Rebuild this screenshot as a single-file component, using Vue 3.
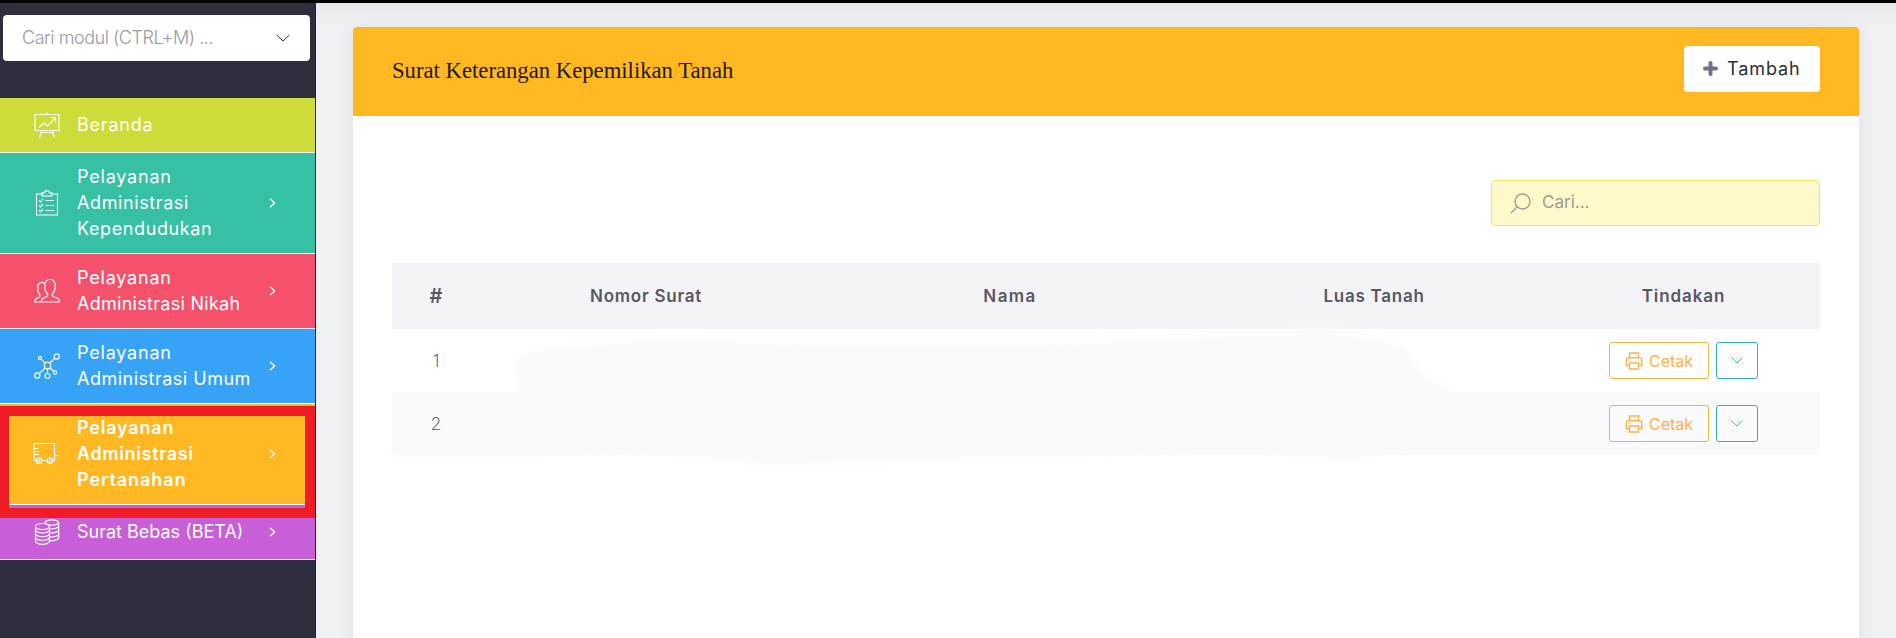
<script setup>
const menu = [
  { key: 'home', lines: ['Beranda'], arrow: false },
  { key: 'people', lines: ['Pelayanan', 'Administrasi', 'Kependudukan'], arrow: true },
  { key: 'marriage', lines: ['Pelayanan', 'Administrasi Nikah'], arrow: true },
  { key: 'general', lines: ['Pelayanan', 'Administrasi Umum'], arrow: true },
  { key: 'land', lines: ['Pelayanan', 'Administrasi', 'Pertanahan'], arrow: true },
  { key: 'free', lines: ['Surat Bebas (BETA)'], arrow: true },
]
const rows = [1, 2]
</script>

<template>
  <div class="app">
    <aside class="sidebar">
      <div class="module">
        <span class="module-text">Cari modul (CTRL+M) ...</span>
        <svg class="module-arrow" viewBox="0 0 14 8"><path d="M.7 1 L7 7 L13.3 1" /></svg>
      </div>
      <nav class="menu">
        <div v-for="m in menu" :key="m.key" class="item" :class="m.key">
          <svg class="icon" viewBox="0 0 26 26">
            <g v-if="m.key === 'home'">
              <path d="M1 2.5h24v16H1zM13 .5v2M7 19v1.5h12V19M7.500 20.500l-2 5M18.500 20.500l2 5" />
              <path d="M5 15.500l5-4.500 3.500 3L21 6M16.500 5.500H21.500V10.500" />
            </g>
            <g v-else-if="m.key === 'people'">
              <path d="M8 4H2.500V25H23.500V4H18M8 2.800h2.500Q10.800.6 13 .6T15.500 2.800H18V6H8z" />
              <path d="M11.500 10.500H20M11.500 15.500H20M11.500 20.500H20M5 10.300l1.500 1.500 2.500-3M5 15.300l1.500 1.500 2.500-3M5 20.300l1.500 1.500 2.500-3" />
            </g>
            <g v-else-if="m.key === 'marriage'">
              <path d="M7.500 24V22.500Q7.500 20.500 10 19.700C12.500 19 13.800 18.500 13.800 16.500C11.800 14.500 10.600 11.500 10.800 8Q10.900 1.500 16 1.500T21.200 8C21.300 11.500 20 14.500 18.200 16.500C18.200 18.500 19.500 19 22 19.700Q25.500 20.500 25.500 24z" />
              <path d="M10.500 5.500Q8.500 3.600 6 5Q3.400 6.500 3.700 10C3.500 13 4.300 15 6 16.800C6.500 19.500 4.500 19.500 2.500 20.500Q.6 21.500.6 24H7.500" />
            </g>
            <g v-else-if="m.key === 'general'">
              <circle cx="13.500" cy="12.500" r="3.300" /><circle cx="22.800" cy="3.500" r="2.600" /><circle cx="3.300" cy="22.500" r="2.600" />
              <circle cx="13.500" cy="23" r="2.500" /><circle cx="6" cy="5" r="1.600" /><circle cx="21" cy="19.500" r="1.700" />
              <path d="M15.800 10l5-4.700M11.200 15l-6 5.700M13.500 16v4.400M7.200 6.200l3.900 4M16 15l3.700 3.300" />
            </g>
            <g v-else-if="m.key === 'land'">
              <path d="M3.500 19.500H1V2.500H21.500V19.500H20M8.500 19.500H14.500M21.500 14.500H25.500M1 7.500H5M1 10.500H8M1 13.500H6" />
              <circle cx="6" cy="19.800" r="2.700" /><circle cx="17" cy="19.800" r="2.700" /><circle cx="6" cy="19.800" r=".6" /><circle cx="17" cy="19.800" r=".6" />
            </g>
            <g v-else>
              <ellipse cx="8.500" cy="7.500" rx="7" ry="3" />
              <path d="M1.500 7.500V22Q2.500 25.300 8.500 25.300T15.500 22V7.500M1.500 11Q3 14 8.500 14T15.500 11M1.500 14.700Q3 17.700 8.500 17.700T15.500 14.700M1.500 18.400Q3 21.400 8.500 21.400T15.500 18.400" />
              <path d="M11 4.500V3.500Q12 .8 17.800.8T24.700 3.500V19Q24 21.500 15.500 22M11 3.500Q12 6.200 17.800 6.200T24.700 3.500M15.500 10Q23.500 10 24.700 7.300M15.500 14Q23.500 14 24.700 11.200M15.500 18Q23.500 18 24.700 15.200" />
            </g>
          </svg>
          <div class="label"><span v-for="(l, i) in m.lines" :key="i" :class="'l' + i">{{ l }}</span></div>
          <svg v-if="m.arrow" class="chev" viewBox="0 0 7 10"><path d="M1 .8L5.600 5 1 9.200" /></svg>
        </div>
      </nav>
      <div class="marker"></div>
    </aside>

    <main class="main">
      <section class="card">
        <header class="card-head">
          <h1>Surat Keterangan Kepemilikan Tanah</h1>
          <button class="add">
            <svg viewBox="0 0 15 15"><path d="M7.500 2v11M2 7.500h11" /></svg>
            <span>Tambah</span>
          </button>
        </header>
        <div class="card-body">
          <div class="search">
            <svg viewBox="0 0 21 21"><circle cx="12.500" cy="8.500" r="7.500" /><path d="M7.200 13.800L.8 20.200" /></svg>
            <span>Cari...</span>
          </div>
          <div class="table">
            <svg class="haze" viewBox="0 0 1160 180">
              <path d="M160 36L300 24 420 30 680 30 960 16 1030 32 1050 60 1085 78 1090 125 1020 136 980 150 880 136 700 142 400 154 270 138 30 146 10 138 40 132 150 80 140 50z" />
            </svg>
            <div class="tr th">
              <span class="hash">#</span><span class="h1">Nomor Surat</span><span class="h2">Nama</span><span class="h3">Luas Tanah</span><span class="h4">Tindakan</span>
            </div>
            <div v-for="r in rows" :key="r" class="tr" :class="{ even: r === 2 }">
              <span class="num">{{ r }}</span><span></span><span></span><span></span>
              <div class="actions">
                <button class="print">
                  <svg viewBox="0 0 18 18"><path d="M4.500 5.500V1h9V5.500M4.500 13.500H1.500V7.500Q1.500 5.700 3.500 5.700H14.500Q16.700 5.700 16.700 7.500V13.500H13.500M4.500 11h9v6h-9zM3.500 8.300h1" /></svg>
                  <span>Cetak</span>
                </button>
                <button class="drop"><svg viewBox="0 0 12 7"><path d="M.6 .6L6 6 11.400 .6" /></svg></button>
              </div>
            </div>
          </div>
        </div>
      </section>
    </main>
  </div>
</template>

<style>
body { margin: 0; overflow: hidden; }
</style>

<style scoped>
* { box-sizing: border-box; }
svg { fill: none; stroke: currentColor; flex: none; display: block; }
button { font: inherit; margin: 0; }
.app { display: flex; width: 1896px; height: 638px; overflow: hidden; border-top: 3px solid #000; font-family: Inter, "Noto Sans", sans-serif; background: #eff1f5; }
.sidebar { position: relative; width: 316px; flex: none; background: #2d2e3e; border-right: 1px solid #25252f; padding-top: 12px; }
.module { display: flex; align-items: center; justify-content: space-between; width: 307px; height: 46px; margin-left: 3px; padding: 0 20px 0 19px; background: #fff; border-radius: 4px; color: #9a9a9e; font-size: 18px; font-weight: 300; }
.module-text { position: relative; top: -1px; letter-spacing: -.45px; white-space: nowrap; }
.module-arrow { width: 14px; height: 8px; color: #333; stroke-width: 1; }
.menu { margin-top: 37px; }
.item { display: flex; align-items: center; height: 75px; border-bottom: 1px solid #f2f5f5; padding-left: 34px; color: #fff; font-size: 18px; line-height: 26px; }
.home { height: 55px; background: #cddc39; }
.people { height: 101px; background: #36c1a4; }
.marriage { background: #f5516c; }
.general { background: #36a3f7; }
.land { height: 101px; background: #ffb822; font-weight: 600; }
.free { height: 55px; background: #c85fd8; }
.icon { width: 26px; height: 26px; stroke-width: 1.15; }
.land .icon { margin-left: -1px; margin-right: 1px; }
.label { width: 190px; margin-left: 17px; display: flex; flex-direction: column; align-items: flex-start; }
.label span { white-space: nowrap; letter-spacing: .6px; }
.label .l0 { letter-spacing: .8px; }
.marriage .label .l1 { letter-spacing: .28px; }
.general .label .l1 { letter-spacing: .5px; }
.land .label .l0 { letter-spacing: .8px; }
.land .label .l1 { letter-spacing: .65px; }
.land .label .l2 { letter-spacing: .95px; }
.free .label .l0 { letter-spacing: 0; }
.chev { width: 7px; height: 10px; margin-left: 2px; stroke-width: 1.3; }
.marker { position: absolute; left: 0; top: 403px; width: 315px; height: 112px; border: 9px solid #ee1c25; border-width: 10px 10px 10px 9px; }
.main { flex: 1; padding: 24px 37px 0; background: linear-gradient(#e9e9ed, #eff1f5 24px); }
.card { width: 1506px; height: 640px; background: #fff; border-radius: 4px; box-shadow: 0 1px 15px 1px rgba(69, 65, 78, .08); }
.card-head { display: flex; justify-content: space-between; align-items: flex-start; height: 89px; padding: 19px 39px 0; background: #ffb822; border-radius: 4px 4px 0 0; }
h1 { margin: 11px 0 0; font: 400 22.700px/27px "Liberation Serif", serif; color: #1e1a10; white-space: nowrap; }
.add { display: flex; align-items: center; width: 136px; height: 46px; padding: 0 0 2px 19px; border: 0; border-radius: 4px; background: #fff; color: #2c2e35; font-size: 18px; letter-spacing: .9px; }
.add svg { width: 15px; height: 15px; margin-right: 9px; color: #70708a; stroke-width: 4; stroke-linecap: round; }
.card-body { padding: 64px 39px 0; }
.search { display: flex; align-items: center; width: 329px; height: 46px; margin-left: auto; padding-left: 18px; border: 1px solid #f3e566; border-radius: 4px; background: #fff8c8; color: #9c9a95; font-size: 17px; }
.search svg { width: 21px; height: 21px; margin-right: 11px; stroke-width: 1.4; color: #a39d9d; }
.search span { position: relative; top: -1px; }
.table { position: relative; margin-top: 37px; }
.tr { display: grid; grid-template-columns: 81px 346px 382px 346px 273px; align-items: center; height: 63px; text-align: center; color: #6f7077; font-size: 17px; }
.tr > :first-child { padding-left: 7px; }
.th { height: 66px; background: #f4f3f8; color: #575962; font-weight: 600; }
.hash { font-size: 20px; }
.h1 { letter-spacing: .75px; }
.h2 { letter-spacing: 1.4px; }
.h3 { letter-spacing: .75px; }
.h4 { letter-spacing: .9px; }
.even { background: #f9fafc; }
.num { font-weight: 300; }
.haze { position: absolute; left: -20px; top: 50px; width: 1160px; height: 180px; fill: #f9fafc; stroke: none; filter: blur(6px); }
.tr > span, .actions { position: relative; }
.actions { display: flex; gap: 7px; padding-left: 62px; }
.print { display: flex; align-items: center; width: 100px; height: 37px; padding: 0 0 0 15px; border: 1px solid #f3b33e; border-radius: 3px; background: #fff; color: #ffb04a; font-size: 16px; }
.print svg { width: 18px; height: 18px; margin-right: 6px; stroke-width: 1.4; }
.drop { display: flex; align-items: center; justify-content: center; width: 42px; height: 37px; padding: 0; border: 1px solid #27b5c4; border-radius: 3px; background: #fff; color: #3bb6c6; }
.drop svg { width: 12px; height: 7px; stroke-width: 1; }
.even button { background: #fafafc; }
</style>
